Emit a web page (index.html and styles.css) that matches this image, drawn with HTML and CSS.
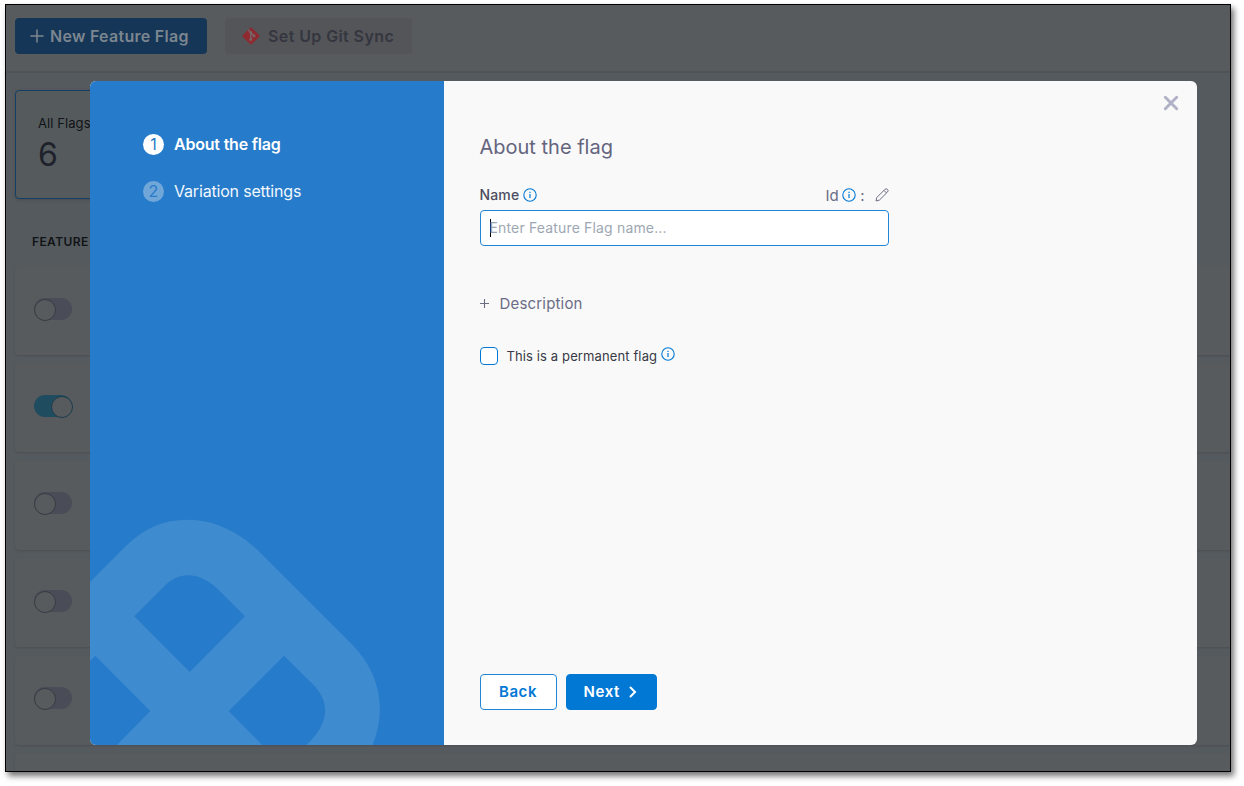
FILE: index.html
```
<!DOCTYPE html>
<html lang="en">
<head>
<meta charset="utf-8">
<title>Feature Flags</title>
<link rel="stylesheet" href="styles.css">
</head>
<body>
<svg class="defs" width="0" height="0">
  <symbol id="info" viewBox="0 0 14 14"><circle cx="7" cy="7" r="6.200" fill="none" stroke="currentColor" stroke-width="1.1"/><path d="M7 6v4" stroke="currentColor" stroke-width="1.2"/><path d="M7 3.8v1.3" stroke="currentColor" stroke-width="1.2"/></symbol>
</svg>
<div class="window">
  <div class="page">
    <header class="toolbar">
      <div class="bg-button primary">
        <svg width="14" height="14" viewBox="0 0 14 14"><path d="M7 .4v13.2M.4 7h13.2" stroke="currentColor" stroke-width="1.5"/></svg>
        <span class="t-new">New Feature Flag</span>
      </div>
      <div class="bg-button muted">
        <svg width="18" height="18" viewBox="0 0 18 18"><path d="M8.1.9a1.3 1.3 0 0 1 1.8 0l7.2 7.2a1.3 1.3 0 0 1 0 1.8l-7.2 7.2a1.3 1.3 0 0 1-1.800 0L.9 9.900a1.300 1.300 0 0 1 0-1.800z" fill="#8e2a30"/><g stroke="#77696c" stroke-width="1.300" fill="#77696c"><path d="M6.200 2.800l5.600 5.900M8.800 5.600v7.200" fill="none"/><circle cx="8.800" cy="5.600" r=".8"/><circle cx="8.800" cy="12.600" r=".8"/><circle cx="12" cy="9" r=".8"/></g></svg>
        <span class="t-git">Set Up Git Sync</span>
      </div>
    </header>
    <main class="listing">
      <div class="summary"><div class="summary-label">All Flags</div><div class="summary-count">6</div></div>
      <div class="column-title">FEATURE</div>
      <div class="rows">
        <div class="row"><span class="toggle"></span></div>
        <div class="row"><span class="toggle on"></span></div>
        <div class="row"><span class="toggle"></span></div>
        <div class="row"><span class="toggle"></span></div>
        <div class="row"><span class="toggle"></span></div>
        <div class="row"></div>
      </div>
    </main>
  </div>
  <section class="dialog">
    <aside class="steps">
      <div class="step active"><span class="num">1</span><span class="t-step1">About the flag</span></div>
      <div class="step"><span class="num">2</span><span class="t-step2">Variation settings</span></div>
      <svg class="mark" viewBox="90 515 354 230"><path fill="#3f8bcf" fill-rule="evenodd" d="M90 582L126.500 545.500C144 528 164 519.700 188 519.700C213 519.700 237 531 256.500 549L350.700 643C380 672 387 709 372.700 745H306.300C329 724 331 703 313.300 684.700L284 655.700 228.700 711 262.300 745H117L150.300 711 95.300 655.700 90 661ZM134.300 616.300L189.700 672 245 616.300 216.700 588C198 571 178 571 163.300 587.300Z"/></svg>
    </aside>
    <div class="form">
      <svg class="close" width="16" height="16" viewBox="0 0 16 16"><path d="M2.300 2.300l11.400 11.400M13.700 2.300L2.300 13.700" stroke="#b0b1c6" stroke-width="2.900" stroke-linecap="round"/></svg>
      <h1><span class="t-title">About the flag</span></h1>
      <div class="labels">
        <span class="name-label"><span class="t-name">Name</span><svg class="info"><use href="#info"/></svg></span>
        <span class="id-label"><span class="t-id">Id</span><svg class="info"><use href="#info"/></svg><span class="colon">:</span><svg class="pencil" width="14" height="14" viewBox="0 0 14 14"><path d="M1 13l.8-3.500L9.900 1.400a1.700 1.700 0 0 1 2.600 2.600l-8.100 8.100zM8.900 2.400l2.600 2.600" fill="none" stroke="currentColor" stroke-width="1" stroke-linejoin="round"/></svg></span>
      </div>
      <div class="input"><span class="caret"></span><span class="t-ph">Enter Feature Flag name...</span></div>
      <div class="description"><svg width="9" height="9" viewBox="0 0 9 9"><path d="M4.500 0v9M0 4.500h9" stroke="currentColor" stroke-width="1.100"/></svg><span class="t-desc">Description</span></div>
      <div class="permanent"><span class="checkbox"></span><span class="t-perm">This is a permanent flag</span><svg class="info"><use href="#info"/></svg></div>
      <div class="actions">
        <div class="button back"><span class="t-back">Back</span></div>
        <div class="button next"><span class="t-next">Next</span><svg width="8" height="12" viewBox="0 0 8 12"><path d="M1.500 1.500L6 6l-4.500 4.500" fill="none" stroke="currentColor" stroke-width="2" stroke-linecap="round"/></svg></div>
      </div>
    </div>
  </section>
</div>
</body>
</html>
```
FILE: styles.css
```
* { box-sizing: border-box; }
body { margin: 0; padding: 4px 0 0 5px; height: 786px; background: #fff; font-family: Inter, sans-serif; overflow: hidden; }
svg { display: block; flex: none; }
span { white-space: nowrap; }
.defs { position: absolute; }
.window { position: relative; width: 1226px; height: 768px; border: 1px solid #000; background: #555a5e; box-shadow: 3px 4px 6px rgba(0,0,0,.55); }
.page { height: 766px; overflow: hidden; }
.toolbar { display: flex; gap: 18px; height: 68px; padding: 13px 9px; background: #585b5e; border-bottom: 2px solid #505259; }
.bg-button { display: flex; align-items: center; height: 36px; border-radius: 4px; font-size: 16px; font-weight: 600; }
.primary { width: 192px; padding-left: 15px; gap: 6px; background: #153656; color: #7c8690; }
.muted { width: 187px; padding-left: 17px; gap: 8px; background: #535559; color: #35363f; }
.t-new { letter-spacing: .28px; }
.t-git { letter-spacing: .4px; }
.listing { padding: 17px 0 0 9px; }
.summary { width: 230px; height: 109px; padding: 24px 22px; border: 1px solid #153e67; border-radius: 4px; background: #555b5d; box-shadow: 0 1px 3px #484c51; }
.summary-label { font-size: 13px; line-height: 16px; letter-spacing: .08px; color: #111317; }
.summary-count { margin-top: 5px; font-size: 32px; line-height: 38px; color: #20222b; }
.column-title { margin: 35px 0 0 17px; font-size: 12px; line-height: 15px; font-weight: 600; letter-spacing: .4px; color: #111317; }
.rows { display: flex; flex-direction: column; gap: 8.4px; margin-top: 17px; }
.row { display: flex; align-items: center; flex: none; height: 89px; width: 1240px; padding: 0 0 4px 19px; border-radius: 4px; background: #575b5d; box-shadow: 0 1px 2px #4c4f54; }
.toggle { width: 38px; height: 22px; padding: 1px 0; border-radius: 11px; background: #4a4d57; }
.toggle::before { content: ""; display: block; width: 20px; height: 20px; border: 1px solid #373b44; border-radius: 50%; background: #585b5d; }
.toggle.on { background: #204c60; }
.toggle.on::before { margin-left: 17px; border-color: #1c3c4d; }
.dialog { position: absolute; left: 84px; top: 76px; display: flex; width: 1107px; height: 664px; border-radius: 6px; overflow: hidden; background: #f9f9f9; }
.steps { display: flex; flex-direction: column; flex: none; width: 353.5px; padding-top: 52px; background: #267bca; }
.step { display: flex; align-items: center; gap: 10px; height: 22px; margin-bottom: 25px; padding-left: 53px; font-size: 16px; color: #f2f7fc; }
.active { color: #fff; font-weight: 600; }
.num { width: 21px; height: 21px; margin-top: 1px; border-radius: 50%; background: #71a6d9; color: #267bca; font-size: 16px; font-weight: 400; line-height: 21px; text-align: center; }
.active .num { background: #fff; }
.t-step1 { letter-spacing: -.2px; }
.t-step2 { letter-spacing: -.18px; }
.mark { width: 354px; height: 230px; margin-top: auto; }
.form { display: flex; flex-direction: column; flex: 1; padding: 14px 18.5px 35px 36px; }
.close { align-self: flex-end; }
h1 { margin: 22px 0 0; font-size: 20px; line-height: 28px; font-weight: 400; color: #64647e; }
.labels { display: flex; justify-content: space-between; width: 409px; height: 20px; margin-top: 24px; }
.name-label, .id-label, .description, .permanent { display: flex; align-items: center; }
.name-label { font-size: 14px; font-weight: 500; color: #4b4d60; gap: 4px; }
.t-name { letter-spacing: .15px; margin-top: -1px; }
.info { width: 14px; height: 14px; color: #0278d5; }
.id-label { font-size: 15px; color: #6b6d85; gap: 4px; }
.id-label .info { margin-left: -.5px; }
.pencil { margin-left: 6px; }
.input { display: flex; align-items: center; width: 409px; height: 36px; margin-top: 5px; padding: 0 0 1px 9px; border: 1px solid #2186d7; border-radius: 4px; background: #fff; font-size: 14px; color: #9da7b2; }
.t-ph { margin-left: -1px; letter-spacing: .16px; }
.caret { width: 1px; height: 18px; background: #000; }
.description { height: 22px; margin-top: 46px; gap: 11px; font-size: 15px; color: #6b6d85; }
.t-desc { letter-spacing: .18px; }
.permanent { height: 20px; margin-top: 32px; font-size: 13px; color: #383946; }
.t-perm { margin-top: -1px; letter-spacing: .12px; }
.checkbox { width: 18px; height: 18px; margin-right: 9px; border: 1px solid #0278d5; border-radius: 4px; background: #fff; }
.permanent .info { margin: -5px 0 0 4px; }
.actions { display: flex; gap: 9px; margin-top: auto; }
.button { display: flex; align-items: center; height: 36px; border: 1px solid #2186d7; border-radius: 4px; font-size: 15px; font-weight: 600; }
.back { width: 77px; justify-content: center; background: #fff; color: #0278d5; }
.next { width: 91px; padding-left: 17px; gap: 9px; background: #0278d5; border-color: #0278d5; color: #fff; }
.button span { margin-top: -1px; letter-spacing: .6px; }
```
